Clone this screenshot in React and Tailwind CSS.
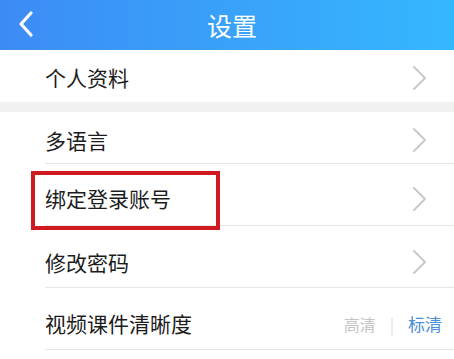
import React from 'react';

const font = { fontFamily: '"Noto Sans CJK SC", "Noto Sans", sans-serif' };

function Chevron() {
  return (
    <svg width="16" height="26" viewBox="0 0 16 26" className="shrink-0">
      <path d="M2 2 L13 13 L2 24" fill="none" stroke="#c9c9c9" strokeWidth="2" strokeLinecap="round" strokeLinejoin="round" />
    </svg>
  );
}

function Row({ label, h, pt, last, children, boxed }) {
  return (
    <div className="pl-[45px] bg-white relative">
      <div
        className={`flex items-center justify-between pr-[26px] ${h} ${pt} ${last ? '' : 'border-b border-[#e6e6e6]'}`}
      >
        <span className="text-[21px] text-[#1c1c1c] leading-none">{label}</span>
        {children || <Chevron />}
      </div>
      {boxed && (
        <div className="absolute z-10 left-[31px] top-[7px] w-[189px] h-[59px] border-4 border-[#cf1a20]" />
      )}
    </div>
  );
}

export default function App() {
  return (
    <div className="w-[454px] h-[359px] bg-white overflow-hidden" style={font}>
      {/* 顶部标题栏 */}
      <div className="h-[50px] bg-gradient-to-r from-[#3c8bf5] to-[#35b7fd] flex items-center justify-center relative">
        <svg width="18" height="28" viewBox="0 0 18 28" className="absolute left-[17px] top-[10px]">
          <path d="M14 3 L4 14 L14 25" fill="none" stroke="#ffffff" strokeWidth="3.2" strokeLinecap="round" strokeLinejoin="round" />
        </svg>
        <span className="text-[25px] text-white leading-none pl-[10px]">设置</span>
      </div>

      <Row label="个人资料" h="h-[52px]" pt="pt-[3px]" last />
      <div className="h-[10px] bg-[#f1f1f1]" />
      <Row label="多语言" h="h-[52px]" pt="pt-[5px]" />
      <Row label="绑定登录账号" h="h-[62px]" pt="pt-[8px]" boxed />
      <Row label="修改密码" h="h-[62px]" pt="pt-[11px]" />
      <Row label="视频课件清晰度" h="h-[62px]" pt="pt-[10px]">
        <div className="flex items-center text-[16px] leading-none mr-[-14px]">
          <span className="text-[#c4c4c4]">高清</span>
          <span className="text-[#dedede] mx-[14px]">|</span>
          <span className="text-[#4a8fd9] text-[17px]">标清</span>
        </div>
      </Row>
    </div>
  );
}
